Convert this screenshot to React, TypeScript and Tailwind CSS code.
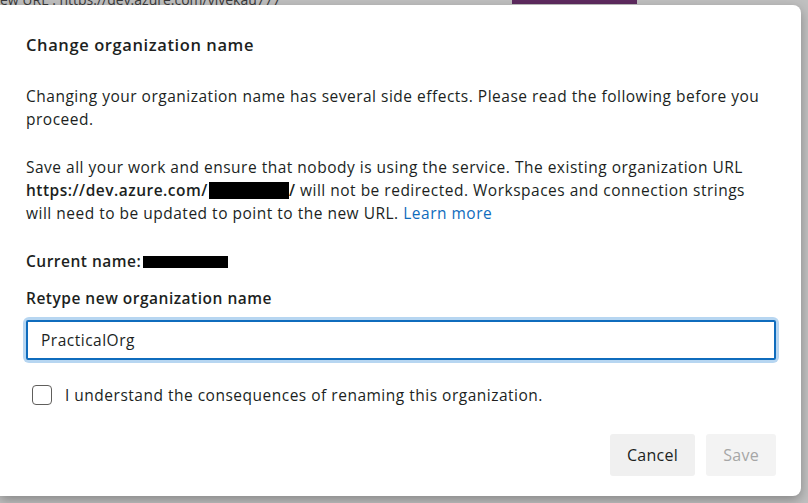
import { useState } from "react";

export default function App() {
  const [name, setName] = useState("PracticalOrg");
  const [agreed, setAgreed] = useState(false);

  return (
    <div
      className="relative w-[808px] h-[503px] overflow-hidden bg-[#c0c0c0] text-[#201f1e]"
      style={{ fontFamily: '"Open Sans", sans-serif' }}
    >
      {/* page behind the overlay */}
      <div className="absolute left-0 top-[-10px] text-[14px] leading-[20px] text-[#3a3a3a] whitespace-nowrap">
        ew URL : https://dev.azure.com/vivekau777
      </div>
      <div className="absolute left-[512px] top-0 w-[125px] h-[4px] bg-[#5e2a5f]" />

      {/* dialog */}
      <div className="relative mt-[5px] w-[801px] h-[491px] bg-white rounded-r-[8px] shadow-[0_4px_12px_rgba(0,0,0,0.3)] flex flex-col px-[26px] text-[15.5px] tracking-[0.5px]">
        <h2 className="mt-[28px] text-[16.5px] tracking-[0.6px] leading-[24px] font-semibold">
          Change organization name
        </h2>

        <p className="mt-[28px] leading-[23px]">
          Changing your organization name has several side effects. Please read the following before you
          <br />
          proceed.
        </p>

        <p className="mt-[25px] leading-[23px]">
          Save all your work and ensure that nobody is using the service. The existing organization URL
          <br />
          <span className="font-semibold">
            https://dev.azure.com/
            <span className="inline-block align-[-3px] ml-[1px] w-[80px] h-[17px] bg-black" />/
          </span>{" "}
          will not be redirected. Workspaces and connection strings
          <br />
          will need to be updated to point to the new URL.{" "}
          <a href="#" className="text-[#0f6cbd]">Learn more</a>
        </p>

        <div className="mt-[25px] flex items-center leading-[23px] font-semibold">
          Current name:
          <span className="ml-[2px] inline-block w-[85px] h-[12px] bg-black" />
        </div>

        <label className="mt-[14px] leading-[23px] font-semibold">Retype new organization name</label>

        <div className="mt-[10px] mr-[-1px] rounded-[3px] ring-[3px] ring-[#b7d6f1]">
          <input
            value={name}
            onChange={(e) => setName(e.target.value)}
            className="block w-full h-[40px] rounded-[2px] border-[2px] border-[#0f6cbd] px-[13px] outline-none tracking-[0.5px]"
            style={{ fontFamily: "inherit", fontSize: "inherit" }}
          />
        </div>

        <label className="mt-[25px] ml-[6px] flex items-center gap-[13px] leading-[20px] cursor-pointer">
          <input
            type="checkbox"
            checked={agreed}
            onChange={(e) => setAgreed(e.target.checked)}
            className="appearance-none w-[20px] h-[20px] rounded-[4px] border border-[#605e5c] bg-white"
          />
          I understand the consequences of renaming this organization.
        </label>

        <div className="mt-[29px] mr-[-1px] flex justify-end gap-[11px]">
          <button className="h-[42px] px-[17px] rounded-[3px] bg-[#f0f0f0] text-[16px] tracking-[0.3px] text-[#201f1e]">
            Cancel
          </button>
          <button
            disabled={!agreed}
            className="h-[42px] px-[17px] rounded-[3px] bg-[#f3f3f3] text-[16px] tracking-[0.3px] text-[#a6a6a6]"
          >
            Save
          </button>
        </div>
      </div>
    </div>
  );
}
